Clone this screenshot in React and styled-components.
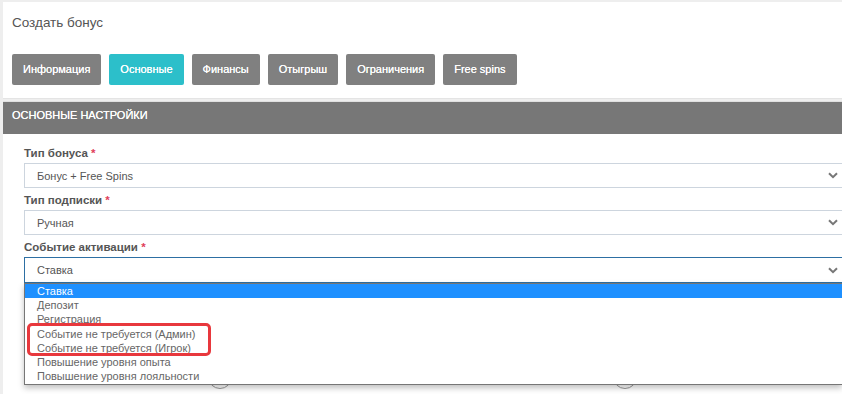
import styled, { createGlobalStyle } from "styled-components";

const tabs = [
  { name: "Информация", active: false },
  { name: "Основные", active: true },
  { name: "Финансы", active: false },
  { name: "Отыгрыш", active: false },
  { name: "Ограничения", active: false },
  { name: "Free spins", active: false },
];

const events = [
  "Ставка",
  "Депозит",
  "Регистрация",
  "Событие не требуется (Админ)",
  "Событие не требуется (Игрок)",
  "Повышение уровня опыта",
  "Повышение уровня лояльности",
];

const GlobalStyle = createGlobalStyle`
  html, body {
    margin: 0;
    padding: 0;
    background: #eeeeee;
    font-family: "Liberation Sans", Arial, sans-serif;
    overflow: hidden;
  }
  * {
    box-sizing: border-box;
  }
`;

const Chevron = () => (
  <svg width="10" height="7" viewBox="0 0 10 7">
    <path d="M1 1.2 L5 5.2 L9 1.2" fill="none" stroke="#777" strokeWidth="2" />
  </svg>
);

const App = () => {
  return (
    <>
      <GlobalStyle />
      <Page>
        <TopCard>
          <Title>Создать бонус</Title>
          <Tabs>
            {tabs.map(({ name, active }) => (
              <Tab key={name} $active={active}>
                {name}
              </Tab>
            ))}
          </Tabs>
        </TopCard>
        <Panel>
          <PanelHeader>Основные настройки</PanelHeader>
          <PanelBody>
            <Field>
              <Label>
                Тип бонуса <Req>*</Req>
              </Label>
              <Select>
                Бонус + Free Spins
                <Chevron />
              </Select>
            </Field>
            <Field>
              <Label>
                Тип подписки <Req>*</Req>
              </Label>
              <Select>
                Ручная
                <Chevron />
              </Select>
            </Field>
            <Field>
              <Label>
                Событие активации <Req>*</Req>
              </Label>
              <SelectWrap>
                <Select $focused>
                  Ставка
                  <Chevron />
                </Select>
                <Dropdown>
                  {events.map((name, i) => (
                    <Option key={name} $selected={i === 0}>
                      {name}
                    </Option>
                  ))}
                  <Highlight />
                </Dropdown>
              </SelectWrap>
            </Field>
            <RadioRow>
              <Circle $left={184} />
              <Circle $left={589} />
            </RadioRow>
          </PanelBody>
        </Panel>
      </Page>
    </>
  );
};

const Page = styled.div`
  padding: 2px 0 0 3px;
  min-height: 394px;
`;

const TopCard = styled.div`
  background: #fff;
  padding: 12px 12px 13px 9px;
  border-bottom: 1px solid #e4e4e4;
`;

const Title = styled.div`
  font-size: 13.5px;
  line-height: 18px;
  color: #555;
`;

const Tabs = styled.div`
  display: flex;
  gap: 8px;
  margin-top: 22px;
`;

const Tab = styled.div`
  height: 31px;
  line-height: 31px;
  padding: 0 11px;
  border-radius: 2px;
  font-size: 11px;
  color: #fff;
  background: ${(p) => (p.$active ? "#2cbfca" : "#808080")};
  text-shadow: 0 0 0.3px #fff;
`;

const Panel = styled.div`
  margin-top: 2px;
  background: #fff;
  height: 300px;
`;

const PanelHeader = styled.div`
  height: 33px;
  line-height: 26px;
  padding-left: 9px;
  background: #777;
  border-top: 1px solid #e0e0e0;
  color: #fff;
  font-size: 11px;
  text-transform: uppercase;
  text-shadow: 0 0 0.3px #fff;
`;

const PanelBody = styled.div`
  padding: 11px 0 0 21px;
  display: flex;
  flex-direction: column;
  gap: 4px;
`;

const Field = styled.div`
  display: flex;
  flex-direction: column;
  gap: 2px;
`;

const Label = styled.div`
  font-size: 11.5px;
  line-height: 16px;
  font-weight: bold;
  color: #555;
`;

const Req = styled.span`
  color: #e0405a;
`;

const SelectWrap = styled.div`
  position: relative;
`;

const Select = styled.div`
  height: ${(p) => (p.$focused ? "26px" : "25px")};
  display: flex;
  align-items: center;
  justify-content: space-between;
  padding: 0 4px 0 12px;
  border: 1px solid ${(p) => (p.$focused ? "#2d6fa3" : "#cdd5de")};
  border-right: none;
  font-size: 11px;
  color: #555;
  background: #fff;
`;

const Dropdown = styled.div`
  position: absolute;
  top: 100%;
  left: 0;
  right: 0;
  z-index: 5;
  background: #fff;
  border: 1px solid #767676;
  border-right: none;
  box-shadow: 0 3px 6px rgba(0, 0, 0, 0.25);
  padding-bottom: 1px;
`;

const Option = styled.div`
  height: 14.2px;
  line-height: 14px;
  padding-left: 12px;
  font-size: 11px;
  color: ${(p) => (p.$selected ? "#fff" : "#666")};
  background: ${(p) => (p.$selected ? "#1e90ff" : "transparent")};
`;

const Highlight = styled.div`
  position: absolute;
  left: 2px;
  top: 39px;
  width: 184px;
  height: 33px;
  border: 3px solid #e8383d;
  border-radius: 5px;
`;

const RadioRow = styled.div`
  position: relative;
  height: 110px;
`;

const Circle = styled.div`
  position: absolute;
  top: 78px;
  left: ${(p) => p.$left}px;
  width: 24px;
  height: 24px;
  border-radius: 50%;
  border: 1px solid #999;
`;

export default App;
